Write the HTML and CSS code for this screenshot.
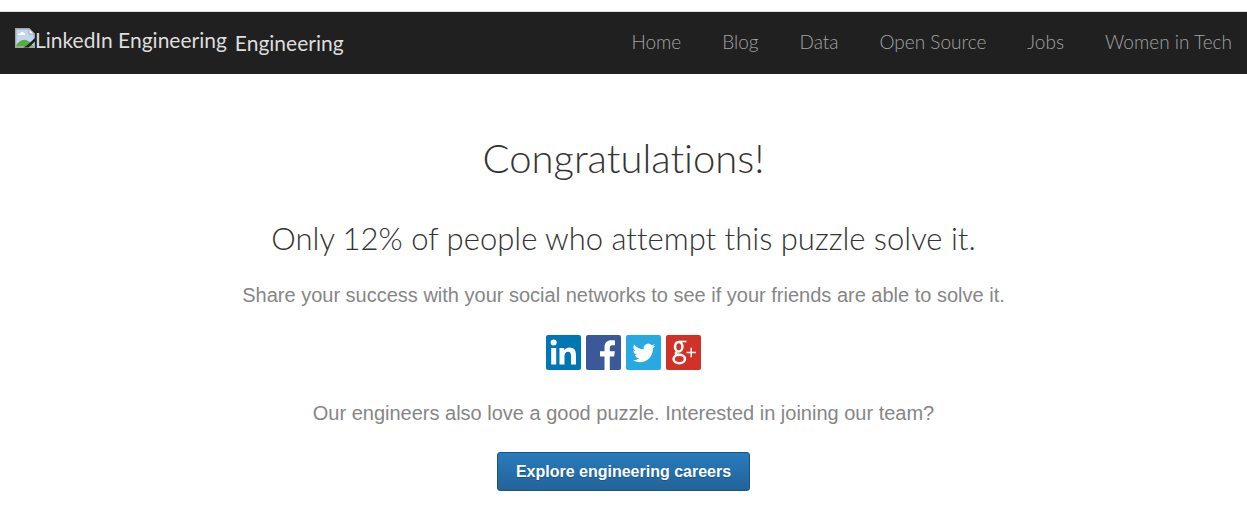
FILE: index.html
```html
<!DOCTYPE html>
<html lang="en">
<head>
<meta charset="utf-8">
<title>LinkedIn Engineering</title>
<meta name="viewport" content="width=device-width, initial-scale=1">
<link rel="stylesheet" href="styles.css">
</head>
<body>
<header class="site-header">
  <a class="brand" href="#">
    <span class="brand-logo">
      <svg class="brand-icon" viewBox="0 0 20 20" aria-hidden="true">
        <path fill="#c3d5f5" stroke="#a5a5a5" stroke-width="1.4" d="M.7.7H14L19.3 6v13.3H.7z"/>
        <path fill="#fff" d="M3 7c0-1.500 1.500-2 2.300-1.500C6 3.500 9 3.800 9 5.500c1.500 0 1.500 1.500 1 1.500z"/>
        <path fill="#5aac3c" d="M1.400 18.600v-1.500C5 12 9 11 12 12.500c3 1 5 3.500 6.600 6.100z"/>
        <path fill="#fff" stroke="#a5a5a5" d="M14 .7V6h5.300z"/>
        <path fill="#202020" d="M20 10v3.500L13.500 19.500H8.500l4-2.500z"/>
      </svg>
      <span>LinkedIn Engineering</span>
    </span>
    <span class="brand-name">Engineering</span>
  </a>
  <nav class="site-nav" aria-label="Main">
    <a href="#">Home</a>
    <a href="#">Blog</a>
    <a href="#">Data</a>
    <a href="#">Open Source</a>
    <a href="#">Jobs</a>
    <a href="#">Women in Tech</a>
  </nav>
</header>
<main class="content">
  <h1 class="title">Congratulations!</h1>
  <h2 class="subtitle">Only 12% of people who attempt this puzzle solve it.</h2>
  <p class="lead">Share your success with your social networks to see if your friends are able to solve it.</p>
  <div class="social">
    <a href="#" aria-label="Share on LinkedIn">
      <svg viewBox="0 0 35 35" aria-hidden="true">
        <rect width="35" height="35" rx="2" fill="#0077b5"/>
        <circle cx="7.700" cy="7.500" r="3" fill="#fff"/>
        <path fill="#fff" d="M5.200 13h5v16.500h-5zM13.500 13h4.800v2.300c1-1.700 2.900-2.800 5.200-2.800 4.800 0 6.500 3 6.500 7.600v9.400h-5v-8.300c0-2.500-.6-4.400-2.900-4.400-2.500 0-3.600 1.700-3.600 4.400v8.300h-5z"/>
      </svg>
    </a>
    <a href="#" aria-label="Share on Facebook">
      <svg viewBox="0 0 35 35" aria-hidden="true">
        <rect width="35" height="35" rx="2" fill="#3b5998"/>
        <path fill="#fff" d="M18.500 35V21.500H14v-5.300h4.500v-3.900c0-4.600 2.700-7 6.900-7 1.700 0 3 .1 3.600.2v4.800h-2.700c-2 0-2.500 1-2.500 2.500v3.400h5l-.7 5.300h-4.300V35z"/>
      </svg>
    </a>
    <a href="#" aria-label="Share on Twitter">
      <svg viewBox="0 0 35 35" aria-hidden="true">
        <rect width="35" height="35" rx="2" fill="#28a9e2"/>
        <path fill="#fff" transform="translate(6.800 6.200) scale(.95)" d="M23.600 4.900c-.9.400-1.800.6-2.800.8 1-.6 1.800-1.600 2.200-2.700-1 .6-2 1-3.100 1.200a4.900 4.900 0 0 0-8.400 4.500C7.400 8.500 3.800 6.500 1.400 3.600a4.900 4.900 0 0 0 1.500 6.500c-.8 0-1.600-.2-2.200-.6v.1a4.900 4.900 0 0 0 3.900 4.800c-.7.200-1.500.2-2.200.1a4.900 4.900 0 0 0 4.600 3.400A9.900 9.900 0 0 1-.3 19.900a14 14 0 0 0 7.500 2.200c9.100 0 14-7.500 14-14v-.6c1-.7 1.800-1.600 2.400-2.600z"/>
      </svg>
    </a>
    <a href="#" aria-label="Share on Google Plus">
      <svg viewBox="0 0 35 35" aria-hidden="true">
        <rect width="35" height="35" rx="2" fill="#d13227"/>
        <g fill="none" stroke="#fff">
          <ellipse cx="12.700" cy="11.700" rx="3.700" ry="4.800" stroke-width="2.500"/>
          <path stroke-width="1.600" d="M13 6.500h7.500"/>
          <path stroke-width="2.400" d="M11 16.500c-2.500 2.500-.5 3.200 2 3.500"/>
          <ellipse cx="13.300" cy="24" rx="5.700" ry="4.200" stroke-width="2.500"/>
          <path stroke-width="1.500" d="M20.500 17.500H30M25.200 12.700v9.600"/>
        </g>
      </svg>
    </a>
  </div>
  <p class="lead">Our engineers also love a good puzzle. Interested in joining our team?</p>
  <a class="button" href="#">Explore engineering careers</a>
</main>
</body>
</html>
```
FILE: styles.css
```css
* {
  box-sizing: border-box;
}

body {
  margin: 0;
  padding-top: 11px;
  background: #fff;
  color: #333;
  font-family: "Liberation Sans", Arial, sans-serif;
}

a {
  text-decoration: none;
}

.site-header {
  display: flex;
  align-items: center;
  justify-content: space-between;
  min-height: 63px;
  padding: 0 15px 2px;
  border-top: 1px solid #ddd;
  background: #202020;
  font-family: Lato, sans-serif;
  font-weight: 300;
}

.brand {
  display: flex;
  align-items: center;
  gap: 8px;
  color: #ddd;
  font-size: 21px;
  font-weight: 400;
  line-height: 24px;
}

.brand-logo {
  display: flex;
  padding-bottom: 4px;
}

.brand-name {
  padding-top: 2px;
}

.brand-icon {
  width: 20px;
  height: 20px;
}

.site-nav {
  display: flex;
  gap: 41px;
  font-size: 19px;
  line-height: 24px;
}

.site-nav a {
  color: #a3a3a3;
}

.content {
  display: flex;
  flex-direction: column;
  align-items: center;
  padding: 56px 16px 20px;
  text-align: center;
}

.title,
.subtitle {
  margin: 0;
  font-family: Lato, sans-serif;
  font-weight: 300;
  font-variant-ligatures: none;
}

.title {
  font-size: 40px;
  line-height: 56px;
}

.subtitle {
  margin-top: 32px;
  font-size: 31px;
  line-height: 40px;
}

.lead {
  margin: 24px 0;
  color: #868686;
  font-size: 20px;
  line-height: 26px;
}

.social {
  display: flex;
  gap: 5px;
  margin: 3px 0 6px;
}

.social svg {
  display: block;
  width: 35px;
  height: 35px;
}

.button {
  margin-top: 2px;
  padding: 7px 18px;
  border: 1px solid #1d5380;
  border-radius: 3px;
  background: linear-gradient(#287bbc, #23639a);
  color: #fff;
  font-size: 16px;
  font-weight: 700;
  line-height: 23px;
  text-shadow: 0 1px 1px #1d5380;
}
```
